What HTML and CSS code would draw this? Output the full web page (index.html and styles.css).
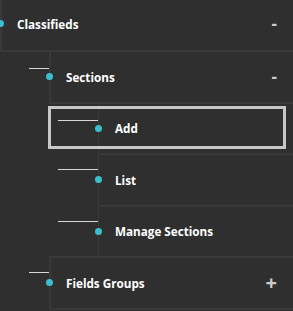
FILE: index.html
```html
<!DOCTYPE html>
<html>
<head>
<meta charset="utf-8">
<link rel="stylesheet" href="styles.css">
</head>
<body>
<ul class="tree">
  <li class="node">
    <div class="row lvl0"><span class="dot"></span><span class="label">Classifieds</span><span class="toggle">-</span></div>
    <ul class="children">
      <li class="node">
        <div class="row lvl1 first"><span class="dot"></span><span class="label">Sections</span><span class="toggle">-</span></div>
        <ul class="children sub">
          <li class="node focused"><div class="row lvl2 first"><span class="dot"></span><span class="label">Add</span></div></li>
          <li class="node"><div class="row lvl2"><span class="dot"></span><span class="label">List</span></div></li>
          <li class="node"><div class="row lvl2"><span class="dot"></span><span class="label">Manage Sections</span></div></li>
        </ul>
      </li>
      <li class="node">
        <div class="row lvl1 last"><span class="dot"></span><span class="label">Fields Groups</span><span class="toggle plus">+</span></div>
      </li>
    </ul>
  </li>
</ul>
</body>
</html>
```
FILE: styles.css
```css
html, body {
  margin: 0;
  padding: 0;
  background: #2f2f2f;
  overflow: hidden;
}
body {
  font-family: "Open Sans", "Liberation Sans", sans-serif;
}
.tree, .children {
  list-style: none;
  margin: 0;
  padding: 0;
}
.children {
  border-top: 2px solid #393939;
}
.children.sub {
  margin-left: 49px;
}
.node {
  position: relative;
}
.row {
  position: relative;
  display: flex;
  align-items: center;
  box-sizing: border-box;
  height: 51.5px;
  border-top: 2px solid #393939;
  border-left: 2px solid #393939;
  padding-right: 16px;
}
.row.first {
  border-top: none;
  height: 49.5px;
}
.row.lvl0 {
  height: 50px;
  border-top: none;
  padding-bottom: 3px;
}
.row.lvl1 {
  margin-left: 49px;
}
.row.lvl2 {
  margin-left: 98px;
  border-left-width: 1px;
}
.children.sub .row.lvl2 {
  margin-left: 49px;
}
.row.last {
  border-bottom: 2px solid #393939;
  height: 53.5px;
}
.dot {
  width: 7px;
  height: 7px;
  border-radius: 50%;
  background: #3bbfd0;
  margin-left: -5px;
  flex: none;
}
.lvl2 .dot {
  margin-left: -4px;
}
.label {
  margin-left: 13px;
  color: #ffffff;
  font-size: 11.7px;
  font-weight: 700;
  flex: 1;
}
.toggle {
  color: #cccccc;
  font-size: 17px;
  font-weight: 700;
  line-height: 1;
}
.toggle.plus {
  font-size: 20px;
}
.lvl1::before, .lvl2::before {
  content: "";
  position: absolute;
  top: 14px;
  height: 1px;
  background: #d8d8d8;
}
.lvl1.first::before, .lvl2.first::before {
  top: 16px;
}
.lvl1::before {
  left: -22px;
  width: 20px;
}
.lvl2::before {
  left: -41px;
  width: 40px;
}
.focused::after {
  content: "";
  position: absolute;
  left: -1px;
  right: 7px;
  top: 2.5px;
  bottom: 4px;
  border: 3px solid #c8c8c8;
  pointer-events: none;
}
```
